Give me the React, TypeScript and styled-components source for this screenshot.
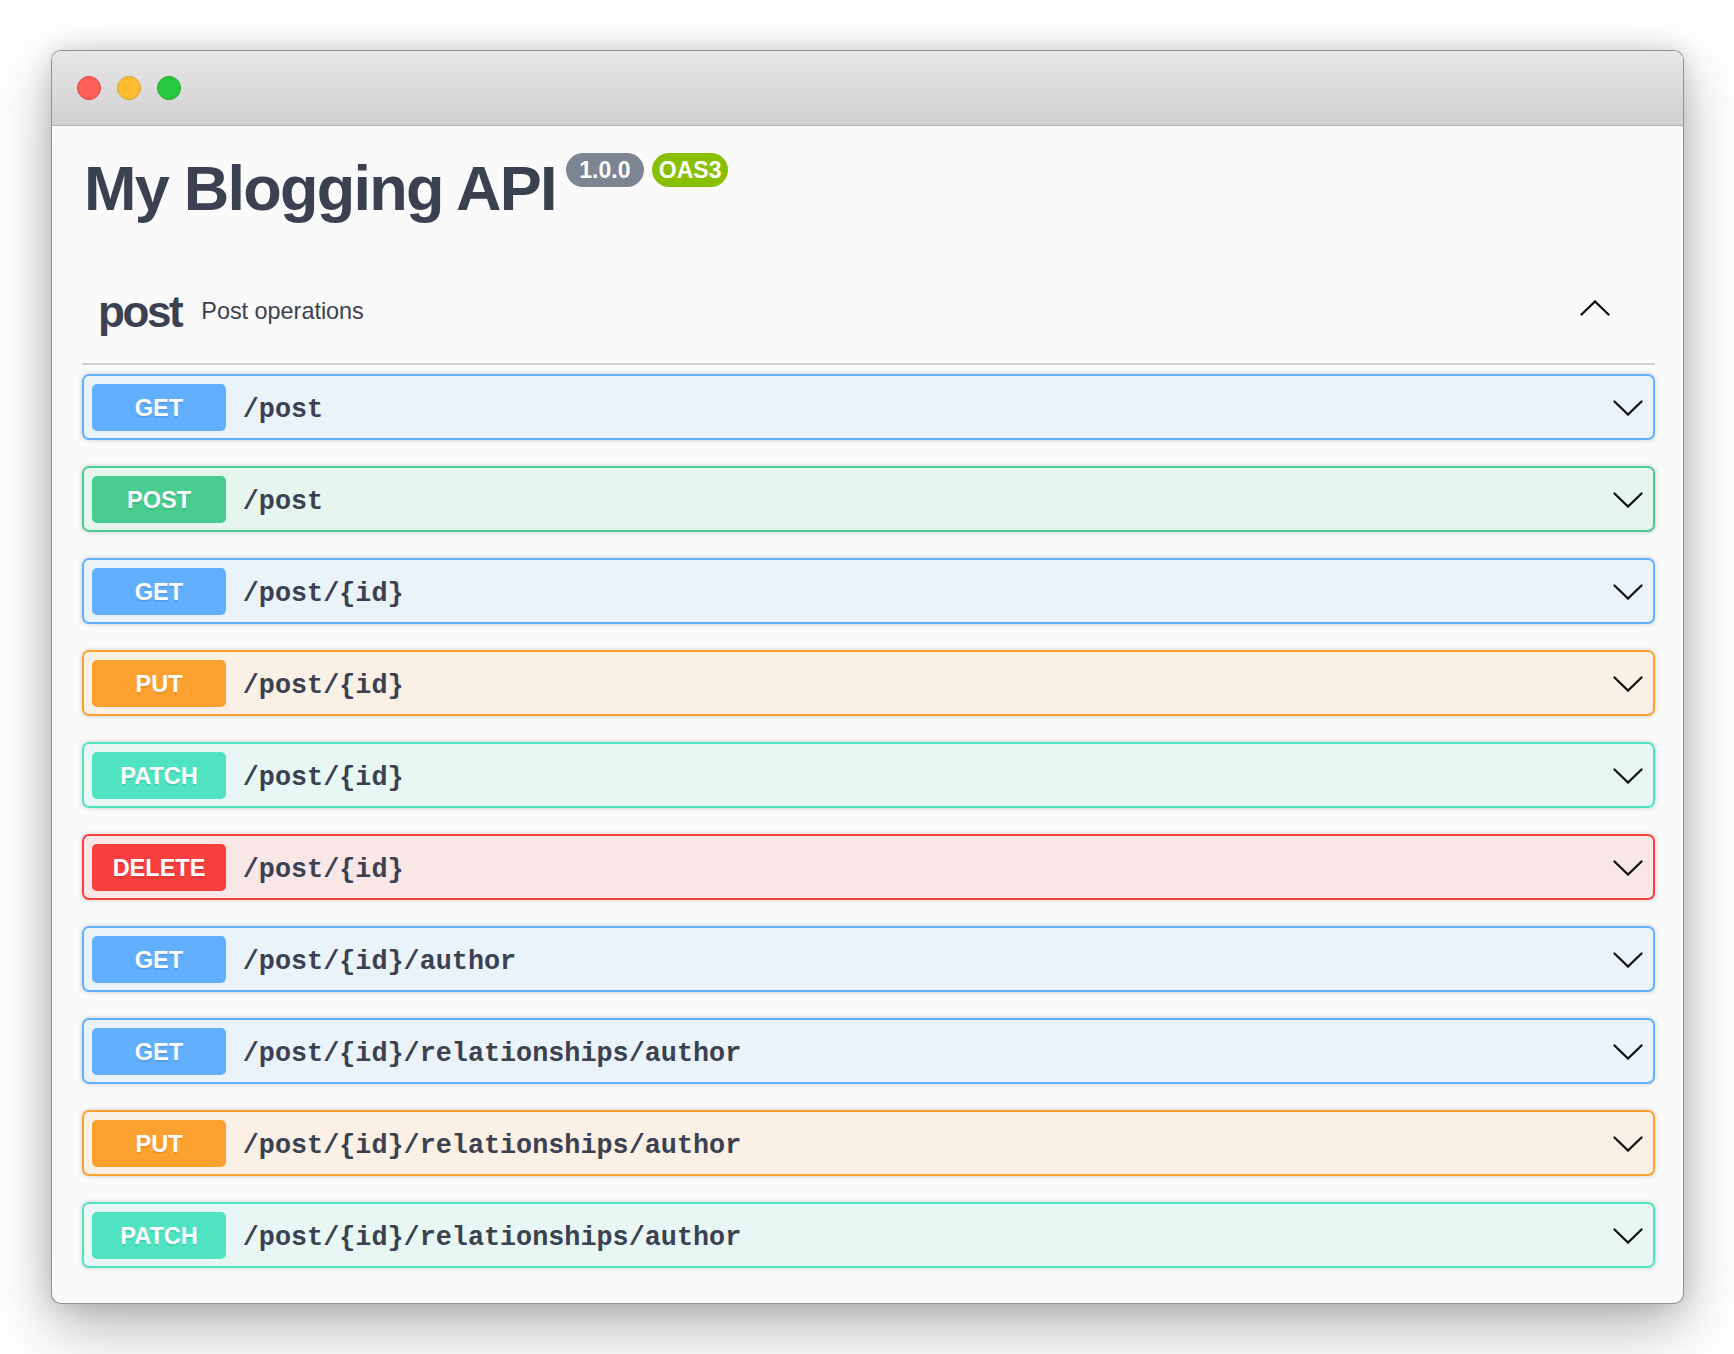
import React from 'react';
import styled, { createGlobalStyle } from 'styled-components';

const GlobalStyle = createGlobalStyle`
  html, body { margin: 0; padding: 0; background: #ffffff; height: 100%; overflow: hidden; }
  body { font-family: "Liberation Sans", Arial, sans-serif; }
  * { box-sizing: border-box; }
`;

const Page = styled.div`
  padding: 50px 0 0 51px;
`;

const Window = styled.div`
  width: 1633px;
  border: 1px solid rgba(0, 0, 0, 0.42);
  border-radius: 10px;
  overflow: hidden;
  background: #fafafa;
  box-shadow: 0 22px 60px rgba(0, 0, 0, 0.3), 0 0 24px rgba(0, 0, 0, 0.12);
`;

const TitleBar = styled.div`
  height: 75px;
  border-bottom: 1px solid #b3b3b3;
  background: linear-gradient(#e7e7e7, #d1d1d1);
  display: flex;
  align-items: center;
  gap: 16px;
  padding-left: 25px;
`;

const Light = styled.span<{ $c: string; $b: string }>`
  width: 24px;
  height: 24px;
  border-radius: 50%;
  background: ${(p) => p.$c};
  border: 1px solid ${(p) => p.$b};
`;

const Content = styled.div`
  padding: 27px 28px 35px 30px;
`;

const InfoRow = styled.div`
  display: flex;
  align-items: flex-start;
`;

const Title = styled.h1`
  margin: 1px 10px 0 2px;
  font-size: 63px;
  line-height: 69px;
  font-weight: 700;
  letter-spacing: -1.75px;
  color: #3b4151;
`;

const Badges = styled.div`
  display: flex;
  gap: 8px;
`;

const Badge = styled.span<{ $bg: string }>`
  display: inline-block;
  height: 34px;
  line-height: 34px;
  padding: 0 7px;
  border-radius: 17px;
  background: ${(p) => p.$bg};
  color: #fff;
  font-size: 23px;
  font-weight: 700;
  white-space: pre;
`;

const TagHeader = styled.div`
  margin-top: 33px;
  height: 109px;
  border-bottom: 2px solid rgba(59, 65, 81, 0.22);
  display: flex;
  align-items: center;
  padding: 4px 45px 0 16px;
`;

const TagName = styled.span`
  font-size: 44px;
  line-height: 1;
  font-weight: 700;
  letter-spacing: -2.4px;
  color: #3b4151;
`;

const TagDesc = styled.span`
  flex: 1;
  margin-left: 20px;
  font-size: 23.4px;
  line-height: 1;
  color: #3b4151;
`;

const OpList = styled.div`
  margin-top: 9px;
  display: flex;
  flex-direction: column;
  gap: 26px;
`;

const OpRow = styled.div<{ $c: string }>`
  height: 66px;
  border: 2px solid ${(p) => p.$c};
  border-radius: 7px;
  background: ${(p) => p.$c}1a;
  box-shadow: 0 0 5px rgba(0, 0, 0, 0.19);
  display: flex;
  align-items: center;
  padding: 0 10px 0 8px;
`;

const Method = styled.span<{ $c: string }>`
  width: 134px;
  height: 47px;
  line-height: 48px;
  border-radius: 5px;
  background: ${(p) => p.$c};
  color: #fff;
  text-align: center;
  font-size: 23.5px;
  font-weight: 700;
  text-shadow: 0 2px 0 rgba(0, 0, 0, 0.1);
`;

const PathText = styled.span`
  flex: 1;
  padding: 6px 16.75px 0;
  font-family: "Liberation Mono", "Courier New", monospace;
  font-size: 26.8px;
  line-height: 1;
  font-weight: 700;
  color: #3b4151;
`;

const ChevronSvg = styled.svg<{ $lift?: number }>`
  flex: none;
  display: block;
  margin-bottom: ${(p) => p.$lift ?? 0}px;
`;

const Chevron: React.FC<{ up?: boolean }> = ({ up }) => (
  <ChevronSvg width="30" height="16" viewBox="0 0 30 16" $lift={up ? 7 : -1}>
    <polyline
      points={up ? '1.5,14.5 15,1.5 28.5,14.5' : '1.5,1.5 15,14.5 28.5,1.5'}
      fill="none"
      stroke="#111"
      strokeWidth="2.3"
      strokeLinecap="round"
      strokeLinejoin="miter"
    />
  </ChevronSvg>
);

const COLORS: Record<string, string> = {
  GET: '#61affe',
  POST: '#49cc90',
  PUT: '#fca130',
  PATCH: '#50e3c2',
  DELETE: '#f93e3e',
};

const ops: { m: string; p: string }[] = [
  { m: 'GET', p: '/post' },
  { m: 'POST', p: '/post' },
  { m: 'GET', p: '/post/{id}' },
  { m: 'PUT', p: '/post/{id}' },
  { m: 'PATCH', p: '/post/{id}' },
  { m: 'DELETE', p: '/post/{id}' },
  { m: 'GET', p: '/post/{id}/author' },
  { m: 'GET', p: '/post/{id}/relationships/author' },
  { m: 'PUT', p: '/post/{id}/relationships/author' },
  { m: 'PATCH', p: '/post/{id}/relationships/author' },
];

export default function App() {
  return (
    <>
      <GlobalStyle />
      <Page>
        <Window>
          <TitleBar>
            <Light $c="#fe5f57" $b="#e0443e" />
            <Light $c="#febc2e" $b="#dea123" />
            <Light $c="#28c840" $b="#1aab29" />
          </TitleBar>
          <Content>
            <InfoRow>
              <Title>My Blogging API</Title>
              <Badges>
                <Badge $bg="#7d8492">{' 1.0.0 '}</Badge>
                <Badge $bg="#89bf04">OAS3</Badge>
              </Badges>
            </InfoRow>
            <TagHeader>
              <TagName>post</TagName>
              <TagDesc>Post operations</TagDesc>
              <Chevron up />
            </TagHeader>
            <OpList>
              {ops.map((o, i) => (
                <OpRow key={i} $c={COLORS[o.m]}>
                  <Method $c={COLORS[o.m]}>{o.m}</Method>
                  <PathText>{o.p}</PathText>
                  <Chevron />
                </OpRow>
              ))}
            </OpList>
          </Content>
        </Window>
      </Page>
    </>
  );
}
